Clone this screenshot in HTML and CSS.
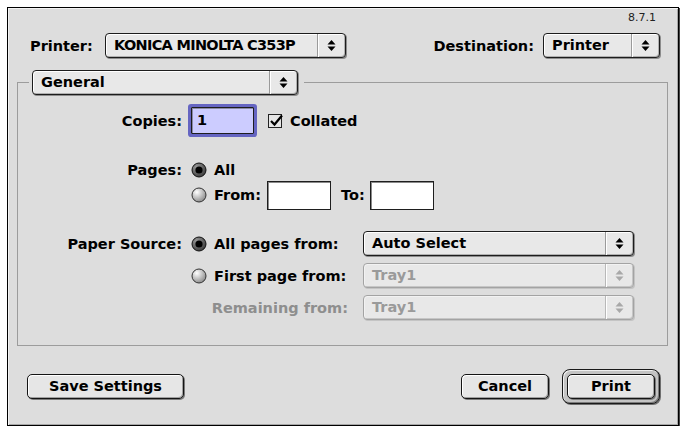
FILE: index.html
```html
<!DOCTYPE html>
<html>
<head>
<meta charset="utf-8">
<link rel="stylesheet" href="styles.css">
</head>
<body>
<div class="window">
  <div class="version">8.7.1</div>
  <div class="toprow">
    <span class="label printer-label">Printer:</span>
    <div class="popup popup-printer">
      <span class="popup-text caps">KONICA MINOLTA C353P</span>
      <span class="popup-arrows"><svg width="9" height="13" viewBox="0 0 9 13"><path d="M0.5 5.5 L4.5 1 L8.5 5.5Z M0.5 7.5 L4.5 12 L8.5 7.5Z" fill="#000"/></svg></span>
    </div>
    <span class="label dest-label">Destination:</span>
    <div class="popup popup-dest">
      <span class="popup-text">Printer</span>
      <span class="popup-arrows"><svg width="9" height="13" viewBox="0 0 9 13"><path d="M0.5 5.5 L4.5 1 L8.5 5.5Z M0.5 7.5 L4.5 12 L8.5 7.5Z" fill="#000"/></svg></span>
    </div>
  </div>

  <fieldset class="group">
    <legend class="group-legend">
      <div class="popup popup-general">
        <span class="popup-text">General</span>
        <span class="popup-arrows"><svg width="9" height="13" viewBox="0 0 9 13"><path d="M0.5 5.5 L4.5 1 L8.5 5.5Z M0.5 7.5 L4.5 12 L8.5 7.5Z" fill="#000"/></svg></span>
      </div>
    </legend>

    <div class="copies-row">
      <span class="label row-label">Copies:</span>
      <span class="field field-copies">1</span>
      <span class="check"><svg width="16" height="16" viewBox="0 0 16 16"><rect x="0.5" y="1.5" width="13" height="13" fill="#e6e6e6" stroke="#222"/><path d="M3 8 L6.5 11.5 L14 2.5" stroke="#000" stroke-width="2.2" fill="none"/></svg></span>
      <span class="label check-label">Collated</span>
    </div>

    <div class="pages">
      <span class="label row-label pages-label">Pages:</span>
      <div class="options">
        <div class="opt opt-all">
          <svg class="radio" width="16" height="16" viewBox="0 0 16 16"><defs><radialGradient id="ra" cx="35%" cy="30%" r="75%"><stop offset="0" stop-color="#9a9a9a"/><stop offset="1" stop-color="#3a3a3a"/></radialGradient></defs><circle cx="8" cy="8" r="7" fill="url(#ra)" stroke="#111"/><circle cx="8" cy="8" r="3.6" fill="#000"/></svg>
          <span class="label opt-text">All</span>
        </div>
        <div class="opt opt-from">
          <svg class="radio" width="16" height="16" viewBox="0 0 16 16"><defs><radialGradient id="rb" cx="35%" cy="30%" r="75%"><stop offset="0" stop-color="#ffffff"/><stop offset="1" stop-color="#8a8a8a"/></radialGradient></defs><circle cx="8" cy="8" r="7" fill="url(#rb)" stroke="#333"/></svg>
          <span class="label opt-text">From:</span>
          <span class="field field-from"></span>
          <span class="label to-label">To:</span>
          <span class="field field-to"></span>
        </div>
      </div>
    </div>

    <div class="source">
      <span class="label row-label">Paper Source:</span>
      <div class="src-opt">
        <svg class="radio" width="16" height="16" viewBox="0 0 16 16"><defs><radialGradient id="rc" cx="35%" cy="30%" r="75%"><stop offset="0" stop-color="#9a9a9a"/><stop offset="1" stop-color="#3a3a3a"/></radialGradient></defs><circle cx="8" cy="8" r="7" fill="url(#rc)" stroke="#111"/><circle cx="8" cy="8" r="3.6" fill="#000"/></svg>
        <span class="label opt-text">All pages from:</span>
      </div>
      <div class="popup popup-src">
        <span class="popup-text">Auto Select</span>
        <span class="popup-arrows"><svg width="9" height="13" viewBox="0 0 9 13"><path d="M0.5 5.5 L4.5 1 L8.5 5.5Z M0.5 7.5 L4.5 12 L8.5 7.5Z" fill="#000"/></svg></span>
      </div>

      <span class="row-label"></span>
      <div class="src-opt">
        <svg class="radio" width="16" height="16" viewBox="0 0 16 16"><defs><radialGradient id="rd" cx="35%" cy="30%" r="75%"><stop offset="0" stop-color="#ffffff"/><stop offset="1" stop-color="#8a8a8a"/></radialGradient></defs><circle cx="8" cy="8" r="7" fill="url(#rd)" stroke="#333"/></svg>
        <span class="label opt-text">First page from:</span>
      </div>
      <div class="popup popup-src disabled">
        <span class="popup-text">Tray1</span>
        <span class="popup-arrows"><svg width="9" height="13" viewBox="0 0 9 13"><path d="M0.5 5.5 L4.5 1 L8.5 5.5Z M0.5 7.5 L4.5 12 L8.5 7.5Z" fill="#a8a8a8"/></svg></span>
      </div>

      <span class="row-label"></span>
      <div class="src-opt src-right">
        <span class="label opt-text dim">Remaining from:</span>
      </div>
      <div class="popup popup-src disabled">
        <span class="popup-text">Tray1</span>
        <span class="popup-arrows"><svg width="9" height="13" viewBox="0 0 9 13"><path d="M0.5 5.5 L4.5 1 L8.5 5.5Z M0.5 7.5 L4.5 12 L8.5 7.5Z" fill="#a8a8a8"/></svg></span>
      </div>
    </div>
  </fieldset>

  <div class="buttons">
    <div class="btn btn-save">Save Settings</div>
    <div class="btn btn-cancel">Cancel</div>
    <div class="default-ring"><div class="btn btn-print">Print</div></div>
  </div>
</div>
</body>
</html>
```

FILE: styles.css
```css
html, body {
  margin: 0;
  padding: 0;
  background: #ffffff;
}

body {
  font-family: "DejaVu Sans", "Liberation Sans", sans-serif;
  font-weight: bold;
  font-size: 14.5px;
  color: #000;
}

.window {
  box-sizing: border-box;
  margin: 7px 0 0 7px;
  width: 672px;
  height: 419px;
  background: #dddddd;
  border: 1px solid #000;
  box-shadow: inset 1px 1px 0 #f4f4f4, inset -1px -1px 0 #a6a6a6, 1px 1px 0 #444;
  display: flex;
  flex-direction: column;
}

.version {
  height: 25px;
  box-sizing: border-box;
  padding: 4px 22px 0 0;
  text-align: right;
  font-family: "DejaVu Sans", sans-serif;
  font-weight: normal;
  font-size: 11px;
  line-height: 12px;
  color: #222;
}

.label {
  white-space: nowrap;
}

.toprow {
  display: flex;
  align-items: center;
  height: 25px;
  padding: 0 18px 0 22px;
}

.printer-label {
  width: 75px;
}

.dest-label {
  margin-left: auto;
}

/* popup menus */
.popup {
  box-sizing: border-box;
  display: flex;
  height: 25px;
  border: 1px solid #1c1c1c;
  border-radius: 4px;
  background: #e8e8e8;
  box-shadow: inset 1px 1px 0 #ffffff, inset -1px -1px 0 #b0b0b0, 1px 1px 0 #8c8c8c;
}

.popup-text {
  flex: 1;
  padding-left: 8px;
  line-height: 23px;
  white-space: nowrap;
  overflow: hidden;
}

.caps {
  letter-spacing: -0.7px;
}

.popup-arrows {
  width: 27px;
  border-left: 1px solid #9a9a9a;
  box-shadow: inset 1px 0 0 #fff;
  display: flex;
  align-items: center;
  justify-content: center;
}

.popup.disabled {
  border-color: #a3a3a3;
  color: #9a9a9a;
  box-shadow: inset 1px 1px 0 #f2f2f2, inset -1px -1px 0 #c6c6c6, 1px 1px 0 #c4c4c4;
}

.popup.disabled .popup-arrows {
  border-left-color: #b8b8b8;
}

.popup-printer {
  width: 241px;
}

.popup-dest {
  width: 117px;
  margin-left: 9px;
}

.popup-general {
  width: 266px;
}

.popup-src {
  width: 271px;
  margin-left: 15px;
}

/* group box */
.group {
  margin: 12px 10px 0 9px;
  min-width: 0;
  padding: 0 10px 25px 11px;
  border: 1px solid #9c9c9c;
}

.group-legend {
  padding: 0 6px 0 3px;
}

.row-label {
  width: 153px;
  text-align: right;
  flex: none;
}

.copies-row {
  display: flex;
  align-items: center;
  height: 33px;
  margin-top: 9px;
}

.field {
  box-sizing: border-box;
  display: block;
  background: #ffffff;
  border: 1px solid #1e1e1e;
  box-shadow: inset 1px 1px 0 #8a8a8a;
}

.field-copies {
  width: 63px;
  height: 27px;
  margin-left: 9px;
  background: #ccccff;
  border-radius: 1px;
  box-shadow: 0 0 0 3px #6565c2, inset 1px 1px 0 #8a8aa8;
  padding-left: 5px;
  line-height: 25px;
}

.check {
  display: flex;
  margin-left: 14px;
}

.check-label {
  margin-left: 6px;
}

.pages {
  display: flex;
  margin-top: 23px;
}

.pages-label {
  line-height: 20px;
}

.options {
  margin-left: 9px;
}

.opt {
  display: flex;
  align-items: center;
}

.opt-all {
  height: 20px;
}

.opt-from {
  height: 30px;
}

.radio {
  flex: none;
}

.opt-text {
  margin-left: 7px;
}

.field-from,
.field-to {
  width: 64px;
  height: 29px;
}

.field-from {
  margin-left: 6px;
}

.to-label {
  margin-left: 10px;
}

.field-to {
  margin-left: 5px;
}

.source {
  display: grid;
  grid-template-columns: 153px 166px 286px;
  grid-auto-rows: 25px;
  row-gap: 7px;
  margin-top: 21px;
  align-items: center;
}

.src-opt {
  display: flex;
  align-items: center;
  padding-left: 9px;
}

.src-right {
  justify-content: flex-end;
  padding-right: 0;
}

.dim {
  color: #8e8e8e;
}

/* buttons */
.buttons {
  display: flex;
  align-items: center;
  margin-top: 23px;
  padding: 0 18px 0 19px;
}

.btn {
  box-sizing: border-box;
  height: 25px;
  line-height: 23px;
  text-align: center;
  border: 1px solid #141414;
  border-radius: 5px;
  background: #e6e6e6;
  box-shadow: inset 1px 1px 0 #ffffff, inset -1px -1px 0 #a0a0a0, 1px 1px 0 #7a7a7a;
}

.btn-save {
  width: 157px;
}

.btn-cancel {
  width: 88px;
  margin-left: auto;
  margin-right: 13px;
}

.default-ring {
  padding: 4px;
  border: 1px solid #1a1a1a;
  border-radius: 8px;
  background: #c4c4c4;
  box-shadow: inset 1px 1px 0 #efefef, inset -1px -1px 0 #7c7c7c, 1px 1px 0 #6e6e6e;
}

.btn-print {
  width: 88px;
}
```
